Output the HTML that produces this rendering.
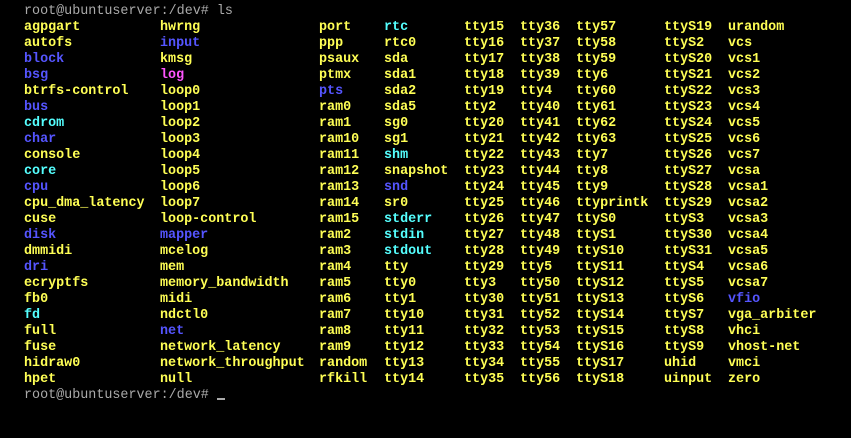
<!DOCTYPE html><html><head><style>
html,body{margin:0;background:#000;width:851px;height:434px;overflow:hidden}
body{font-family:"Liberation Mono","DejaVu Sans Mono",monospace;font-size:13.4px;font-weight:bold;color:#ffff55;padding-top:4px}
.l{height:16px;line-height:16px;white-space:pre;padding-left:24px}
.l span{display:inline-block}
.p{color:#aaaaaa;font-weight:normal}
.b{color:#5555ff}.c{color:#55ffff}.m{color:#ff55ff}
.cur{display:inline-block;width:8px;height:2px;background:#aaa;vertical-align:-2px}
</style></head><body>
<div class="l p">root@ubuntuserver:/dev# ls</div>
<div id="g"></div>
<div class="l p">root@ubuntuserver:/dev# <span class="cur"></span></div>
<script>
var rows=`agpgart hwrng port c:rtc tty15 tty36 tty57 ttyS19 urandom
autofs b:input ppp rtc0 tty16 tty37 tty58 ttyS2 vcs
b:block kmsg psaux sda tty17 tty38 tty59 ttyS20 vcs1
b:bsg m:log ptmx sda1 tty18 tty39 tty6 ttyS21 vcs2
btrfs-control loop0 b:pts sda2 tty19 tty4 tty60 ttyS22 vcs3
b:bus loop1 ram0 sda5 tty2 tty40 tty61 ttyS23 vcs4
c:cdrom loop2 ram1 sg0 tty20 tty41 tty62 ttyS24 vcs5
b:char loop3 ram10 sg1 tty21 tty42 tty63 ttyS25 vcs6
console loop4 ram11 c:shm tty22 tty43 tty7 ttyS26 vcs7
c:core loop5 ram12 snapshot tty23 tty44 tty8 ttyS27 vcsa
b:cpu loop6 ram13 b:snd tty24 tty45 tty9 ttyS28 vcsa1
cpu_dma_latency loop7 ram14 sr0 tty25 tty46 ttyprintk ttyS29 vcsa2
cuse loop-control ram15 c:stderr tty26 tty47 ttyS0 ttyS3 vcsa3
b:disk b:mapper ram2 c:stdin tty27 tty48 ttyS1 ttyS30 vcsa4
dmmidi mcelog ram3 c:stdout tty28 tty49 ttyS10 ttyS31 vcsa5
b:dri mem ram4 tty tty29 tty5 ttyS11 ttyS4 vcsa6
ecryptfs memory_bandwidth ram5 tty0 tty3 tty50 ttyS12 ttyS5 vcsa7
fb0 midi ram6 tty1 tty30 tty51 ttyS13 ttyS6 b:vfio
c:fd ndctl0 ram7 tty10 tty31 tty52 ttyS14 ttyS7 vga_arbiter
full b:net ram8 tty11 tty32 tty53 ttyS15 ttyS8 vhci
fuse network_latency ram9 tty12 tty33 tty54 ttyS16 ttyS9 vhost-net
hidraw0 network_throughput random tty13 tty34 tty55 ttyS17 uhid vmci
hpet null rfkill tty14 tty35 tty56 ttyS18 uinput zero`.split("\n");
var w=[136,159,65,80,56,56,88,64,100],h="";
rows.forEach(function(r){h+='<div class="l">';r.split(" ").forEach(function(t,i){var c="";if(t[1]==":"){c=t[0];t=t.slice(2);}h+='<span class="'+c+'" style="width:'+w[i]+'px">'+t+'</span>';});h+='</div>';});
document.getElementById("g").innerHTML=h;
</script>
</body></html>
